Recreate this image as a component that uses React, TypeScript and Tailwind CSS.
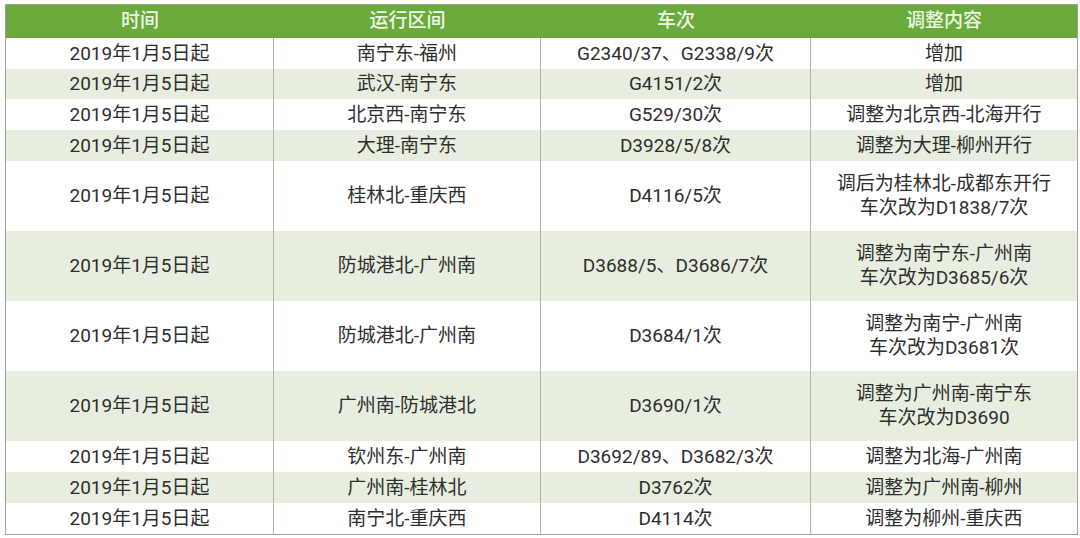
const rows: { h: "s" | "t"; c: string[] }[] = [
  { h: "s", c: ["2019年1月5日起", "南宁东-福州", "G2340/37、G2338/9次", "增加"] },
  { h: "s", c: ["2019年1月5日起", "武汉-南宁东", "G4151/2次", "增加"] },
  { h: "s", c: ["2019年1月5日起", "北京西-南宁东", "G529/30次", "调整为北京西-北海开行"] },
  { h: "s", c: ["2019年1月5日起", "大理-南宁东", "D3928/5/8次", "调整为大理-柳州开行"] },
  { h: "t", c: ["2019年1月5日起", "桂林北-重庆西", "D4116/5次", "调后为桂林北-成都东开行\n车次改为D1838/7次"] },
  { h: "t", c: ["2019年1月5日起", "防城港北-广州南", "D3688/5、D3686/7次", "调整为南宁东-广州南\n车次改为D3685/6次"] },
  { h: "t", c: ["2019年1月5日起", "防城港北-广州南", "D3684/1次", "调整为南宁-广州南\n车次改为D3681次"] },
  { h: "t", c: ["2019年1月5日起", "广州南-防城港北", "D3690/1次", "调整为广州南-南宁东\n车次改为D3690"] },
  { h: "s", c: ["2019年1月5日起", "钦州东-广州南", "D3692/89、D3682/3次", "调整为北海-广州南"] },
  { h: "s", c: ["2019年1月5日起", "广州南-桂林北", "D3762次", "调整为广州南-柳州"] },
  { h: "s", c: ["2019年1月5日起", "南宁北-重庆西", "D4114次", "调整为柳州-重庆西"] },
];

const heights = [31, 30, 31, 31, 70, 70, 70, 70, 31, 31, 31];
const heads = ["时间", "运行区间", "车次", "调整内容"];

export default function App() {
  return (
    <div
      className="h-[538px] w-[1080px] bg-white pl-[5px] pt-[4px]"
      style={{ fontFamily: 'Roboto, "Noto Sans CJK SC", sans-serif' }}
    >
      <div className="w-[1073px] border border-[#98a98c]">
        <div className="grid h-[33px] grid-cols-[268px_267px_270px_266px] bg-[#6aaa3c] text-[19px] font-medium text-[#eef7e4]">
          {heads.map((h) => (
            <div key={h} className="flex items-center justify-center">
              {h}
            </div>
          ))}
        </div>
        {rows.map((r, i) => (
          <div
            key={i}
            className={`grid grid-cols-[268px_267px_270px_266px] text-[19px] leading-[24px] text-[#2e2e2e] ${
              i % 2 === 1 ? "bg-[#e8eedf]" : "bg-white"
            }`}
            style={{ height: heights[i] }}
          >
            {r.c.map((c, j) => (
              <div
                key={j}
                className={`flex flex-col items-center justify-center whitespace-pre text-center ${
                  j < 3 ? "border-r border-[#a9bb98]" : ""
                }`}
              >
                {c}
              </div>
            ))}
          </div>
        ))}
      </div>
    </div>
  );
}
